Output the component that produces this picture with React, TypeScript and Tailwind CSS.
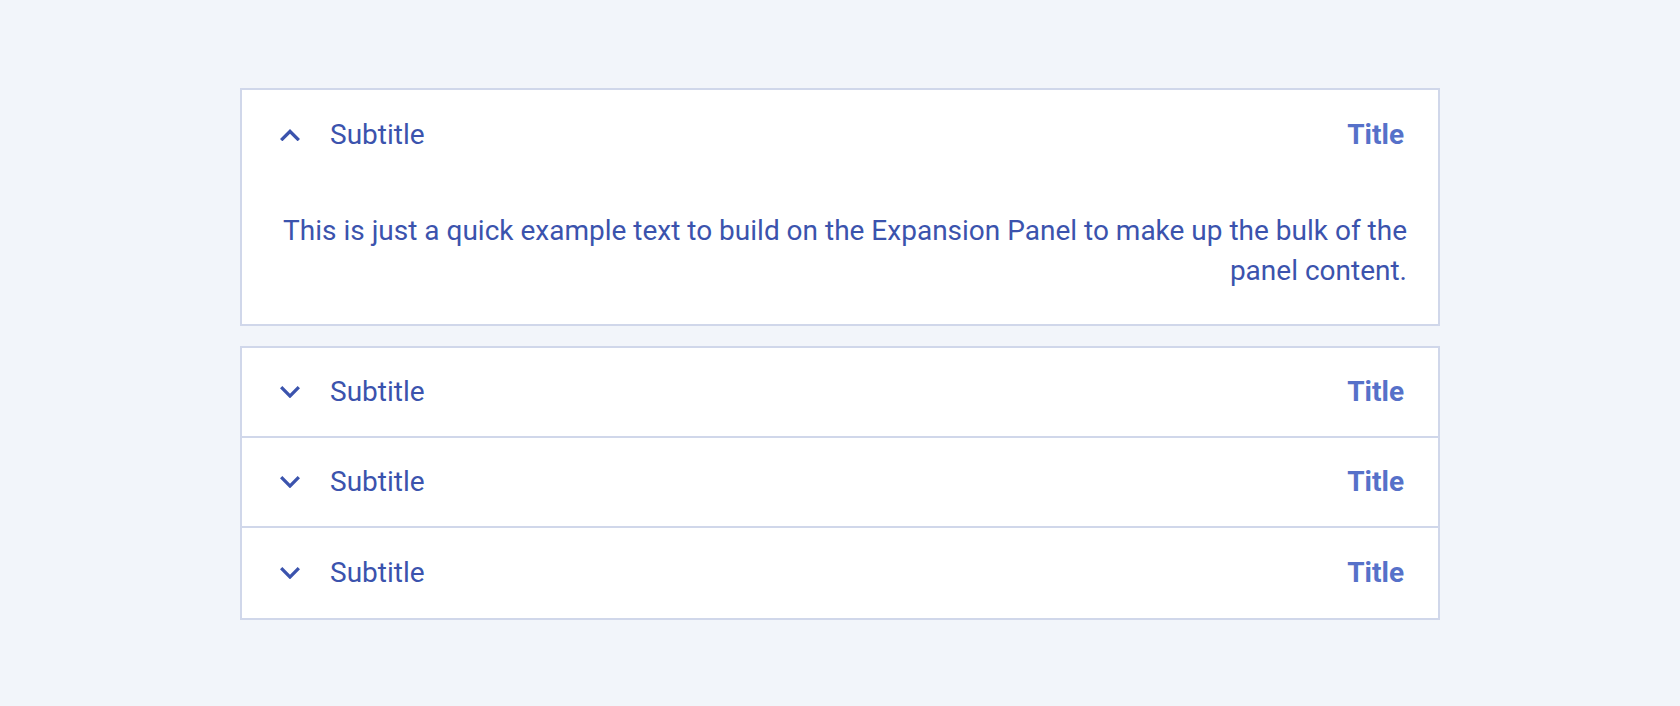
import React from "react";

type Row = { subtitle: string; title: string; open?: boolean };

const rows: Row[] = [
  { subtitle: "Subtitle", title: "Title" },
  { subtitle: "Subtitle", title: "Title" },
  { subtitle: "Subtitle", title: "Title" },
];

function ChevronUp() {
  return (
    <svg viewBox="6 8 12 7.41" className="h-[12.35px] w-5 shrink-0" fill="#3b53ad">
      <path d="M12 8l-6 6 1.41 1.41L12 10.83l4.59 4.58L18 14z" />
    </svg>
  );
}

function ChevronDown() {
  return (
    <svg viewBox="6 8.59 12 7.41" className="h-[12.35px] w-5 shrink-0" fill="#3b53ad">
      <path d="M16.59 8.59L12 13.17 7.41 8.59 6 10l6 6 6-6z" />
    </svg>
  );
}

function Header({ subtitle, title, open }: Row) {
  return (
    <div className="flex h-[90px] items-center pl-[38px] pr-[34px]">
      {open ? <ChevronUp /> : <ChevronDown />}
      <span className="ml-[30px] text-[28px] text-[#3b53ad]">{subtitle}</span>
      <span className="ml-auto text-[28px] font-bold text-[#5671c9]">{title}</span>
    </div>
  );
}

export default function App() {
  return (
    <div className="min-h-screen bg-[#f2f5fa] pt-[88px] font-['Roboto',sans-serif]">
      <div className="mx-auto flex w-[1200px] flex-col gap-5">
        <div className="border-2 border-[#d0d7ea] bg-white">
          <Header subtitle="Subtitle" title="Title" open />
          <p className="pl-9 pr-[31px] pt-[31px] pb-[33px] text-right text-[28px] leading-[40px] text-[#3b53ad]">
            This is just a quick example text to build on the Expansion Panel to make up the
            bulk of the panel content.
          </p>
        </div>
        <div className="divide-y-2 divide-[#d0d7ea] border-2 border-[#d0d7ea] bg-white">
          {rows.map((r, i) => (
            <Header key={i} {...r} />
          ))}
        </div>
      </div>
    </div>
  );
}
